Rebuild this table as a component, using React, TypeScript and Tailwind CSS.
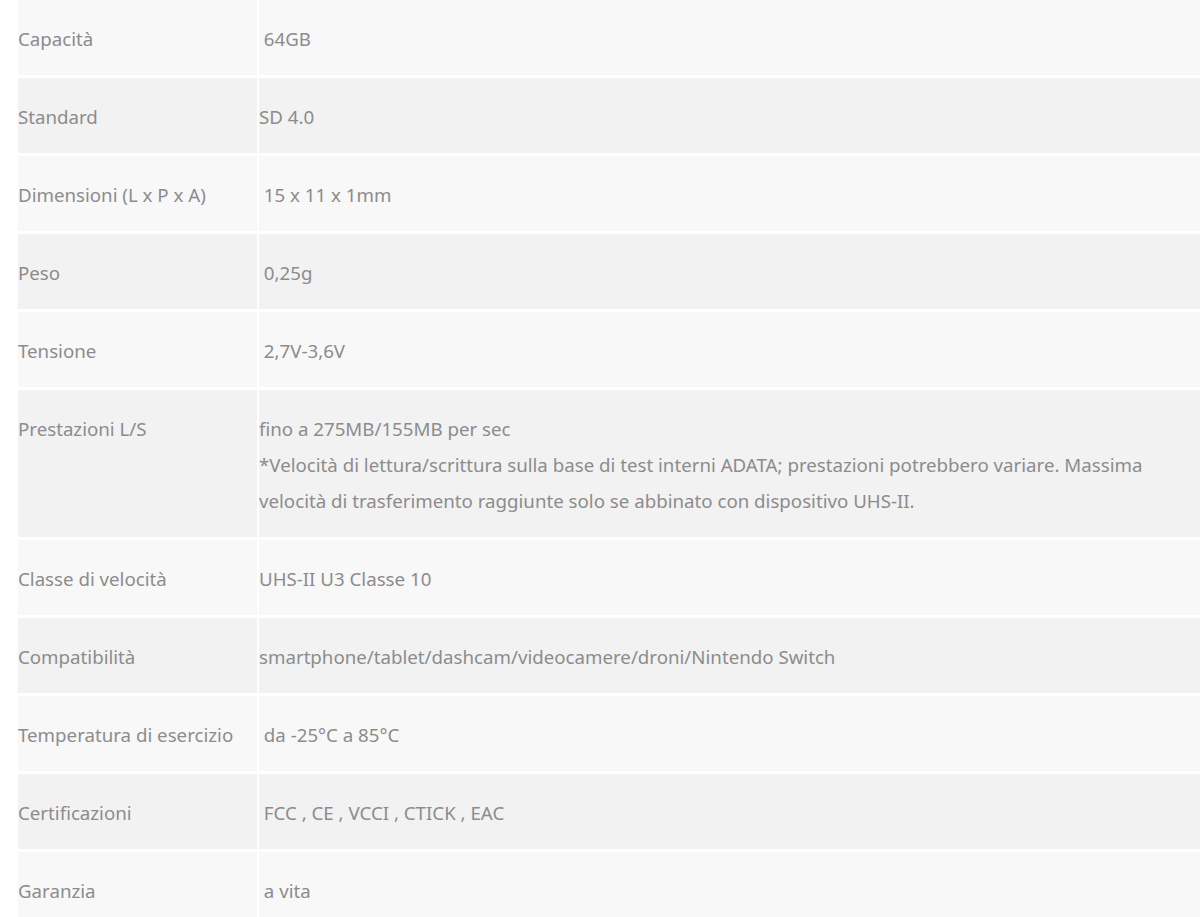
import React from 'react';

const specs: { label: string; value: React.ReactNode }[] = [
  { label: 'Capacità', value: '\u00a064GB' },
  { label: 'Standard', value: 'SD 4.0' },
  { label: 'Dimensioni (L x P x A)', value: '\u00a015 x 11 x 1mm' },
  { label: 'Peso', value: '\u00a00,25g' },
  { label: 'Tensione', value: '\u00a02,7V-3,6V' },
  {
    label: 'Prestazioni L/S',
    value: (
      <>
        fino a 275MB/155MB per sec
        <br />
        *Velocità di lettura/scrittura sulla base di test interni ADATA; prestazioni potrebbero variare. Massima
        velocità di trasferimento raggiunte solo se abbinato con dispositivo UHS-II.
      </>
    ),
  },
  { label: 'Classe di velocità', value: 'UHS-II U3 Classe 10' },
  { label: 'Compatibilità', value: 'smartphone/tablet/dashcam/videocamere/droni/Nintendo Switch' },
  { label: 'Temperatura di esercizio', value: '\u00a0da -25°C a 85°C' },
  { label: 'Certificazioni', value: '\u00a0FCC , CE , VCCI , CTICK , EAC' },
  { label: 'Garanzia', value: '\u00a0a vita' },
];

export default function App() {
  return (
    <div
      className="min-h-screen w-full overflow-hidden bg-white pl-[18px]"
      style={{ fontFamily: '"Noto Sans", "Open Sans", sans-serif' }}
    >
      <div className="flex flex-col gap-[3px] text-[18.7px] leading-[36px] text-[#8c8c8c]">
        {specs.map((row, i) => {
          const bg = i % 2 === 0 ? 'bg-[#f8f8f8]' : 'bg-[#f2f2f2]';
          return (
            <div key={row.label} className="flex gap-[2px]">
              <div className={`w-[239px] shrink-0 pt-[21px] pb-[18px] whitespace-nowrap ${bg}`}>{row.label}</div>
              <div className={`flex-1 pt-[21px] pb-[18px] pr-[10px] ${bg}`}>{row.value}</div>
            </div>
          );
        })}
      </div>
    </div>
  );
}
